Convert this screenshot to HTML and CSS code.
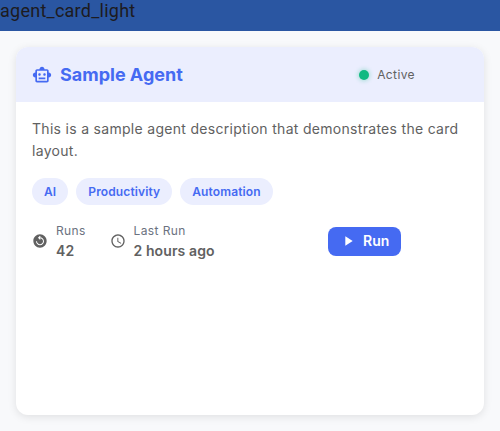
FILE: index.html
```html
<!DOCTYPE html>
<html lang="en">
<head>
<meta charset="utf-8">
<title>Agent card</title>
<link rel="stylesheet" href="styles.css">
</head>
<body>
<header class="topbar">agent_card_light</header>
<main class="card">
  <div class="card-header">
    <svg class="robot" viewBox="0 0 24 24"><path d="M20 9V7c0-1.100-.9-2-2-2h-3c0-1.660-1.340-3-3-3S9 3.340 9 5H6c-1.100 0-2 .9-2 2v2c-1.660 0-3 1.340-3 3s1.340 3 3 3v4c0 1.100.9 2 2 2h12c1.100 0 2-.9 2-2v-4c1.660 0 3-1.340 3-3s-1.340-3-3-3zm-2 10H6V7h12v12zm-9-6c-.83 0-1.500-.67-1.500-1.500S8.170 10 9 10s1.500.67 1.500 1.500S9.830 13 9 13zm7.500-1.500c0 .83-.67 1.500-1.500 1.500s-1.500-.67-1.500-1.500.67-1.500 1.500-1.500 1.500.67 1.500 1.500zM8 15h8v2H8v-2z"/></svg>
    <h1 class="title">Sample Agent</h1>
    <div class="status"><span class="dot"></span><span>Active</span></div>
  </div>
  <div class="card-body">
    <p class="description">This is a sample agent description that demonstrates the card layout.</p>
    <div class="tags"><span class="tag">AI</span><span class="tag">Productivity</span><span class="tag">Automation</span></div>
    <div class="footer">
      <div class="stat runs">
        <svg class="stat-icon" viewBox="0 0 24 24"><path d="M12 2C6.480 2 2 6.480 2 12s4.480 10 10 10 10-4.480 10-10S17.520 2 12 2zM18 12.500c0 3.310-2.690 6-6 6s-6-2.690-6-6h1.500c0 2.490 2.010 4.500 4.500 4.500s4.500-2.010 4.500-4.500S14.490 8 12 8h-.2l1.160 1.160-1.060 1.060-2.970-2.970 2.970-2.970 1.060 1.060L11.800 6.500H12c3.310 0 6 2.690 6 6z"/></svg>
        <div><div class="label">Runs</div><div class="value">42</div></div>
      </div>
      <div class="stat last">
        <svg class="stat-icon" viewBox="0 0 24 24"><path d="M11.990 2C6.470 2 2 6.480 2 12s4.470 10 9.990 10C17.520 22 22 17.520 22 12S17.520 2 11.990 2zM12 20c-4.420 0-8-3.580-8-8s3.580-8 8-8 8 3.580 8 8-3.580 8-8 8zm.5-13H11v6l5.250 3.150.75-1.230-4.500-2.670z"/></svg>
        <div><div class="label">Last Run</div><div class="value">2 hours ago</div></div>
      </div>
      <button class="run"><svg class="play" viewBox="0 0 24 24"><path d="M8 5v14l11-7z"/></svg><span>Run</span></button>
    </div>
  </div>
</main>
</body>
</html>
```
FILE: styles.css
```css
* { box-sizing: border-box; }
body {
  margin: 0;
  height: 431px;
  overflow: hidden;
  background: #f8f9fb;
  font-family: Inter, "Liberation Sans", sans-serif;
  color: #616161;
}
svg { display: block; flex: none; fill: currentColor; }
.topbar {
  height: 31px;
  background: #2a56a2;
  color: #1d1b20;
  font: 18px/22px Roboto, sans-serif;
  letter-spacing: .25px;
}
.card {
  height: 368px;
  margin: 16px;
  overflow: hidden;
  border-radius: 12px;
  background: #fff;
  box-shadow: 0 2px 8px rgba(0, 0, 0, .1);
}
.card-header {
  display: flex;
  align-items: center;
  height: 55px;
  padding: 0 69px 0 16px;
  background: #ebeefe;
}
.robot { width: 20px; height: 20px; color: #456af2; }
.title {
  margin: 0 0 0 8px;
  font-size: 18px;
  line-height: 24px;
  font-weight: 700;
  letter-spacing: 0;
  color: #456af2;
}
.status {
  display: flex;
  align-items: center;
  gap: 8px;
  margin-left: auto;
  font-size: 12px;
  letter-spacing: .4px;
}
.dot {
  width: 10px;
  height: 10px;
  border-radius: 50%;
  background: #10b981;
  box-shadow: 0 0 4px 1px rgba(16, 185, 129, .3);
}
.card-body { padding: 16px; }
.description {
  margin: 0;
  font-size: 14px;
  line-height: 22px;
  letter-spacing: .3px;
}
.tags { display: flex; gap: 8px; margin-top: 16px; }
.tag {
  height: 27px;
  padding: 0 12px;
  border-radius: 14px;
  background: #ebeefe;
  color: #456af2;
  font-size: 12px;
  line-height: 27px;
  font-weight: 600;
  letter-spacing: .12px;
}
.footer { display: flex; align-items: center; margin-top: 16px; height: 40px; }
.stat { display: flex; align-items: center; gap: 8px; }
.runs { width: 77.5px; }
.last { width: 218.5px; }
.stat-icon { width: 16px; height: 16px; }
.label {
  font-size: 12px;
  line-height: 20px;
  letter-spacing: .4px;
  color: #6b7280;
}
.value { font-size: 14px; line-height: 20px; font-weight: 600; letter-spacing: .1px; }
.run {
  display: flex;
  align-items: center;
  width: 73px;
  height: 29px;
  padding: 0 12px;
  border: 0;
  border-radius: 8px;
  background: #456af2;
  color: #fff;
  font: 600 14px/20px Inter, sans-serif;
}
.play { width: 16px; height: 16px; margin-right: 7px; }
```
